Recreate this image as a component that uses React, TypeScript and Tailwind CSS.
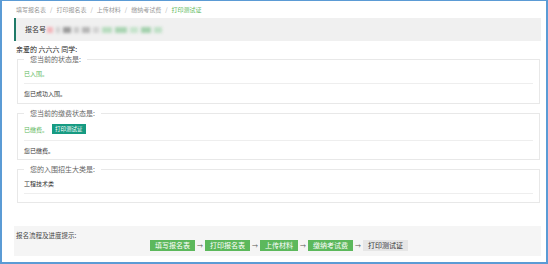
import type { FC, ReactNode } from "react";

const font = { fontFamily: '"Noto Sans CJK SC", "Noto Sans", sans-serif' };

const crumbs = ["填写报名表", "打印报名表", "上传材料", "缴纳考试费", "打印测试证"];

const steps = [
  { label: "填写报名表", done: true },
  { label: "打印报名表", done: true },
  { label: "上传材料", done: true },
  { label: "缴纳考试费", done: true },
  { label: "打印测试证", done: false },
];

const Box: FC<{ title: string; className?: string; children: ReactNode }> = ({ title, className, children }) => (
  <fieldset className={"border border-[#e8e8e8] px-[6px] " + (className ?? "")}>
    <legend className="px-[6px] text-[7px] leading-[10px] text-[#666]">{title}</legend>
    {children}
  </fieldset>
);

const App: FC = () => {
  return (
    <div
      style={font}
      className="w-[548px] h-[264px] overflow-hidden bg-white border-2 border-t border-[#5b9bd5] pl-[12px] pr-[5px] text-[#333]"
    >
      {/* breadcrumb */}
      <div className="h-[17px] flex items-center pl-[2px] text-[6px] text-[#999]">
        {crumbs.map((c, i) => (
          <span key={c} className="flex items-center">
            <span className={i === crumbs.length - 1 ? "text-[#5cb85c]" : ""}>{c}</span>
            {i < crumbs.length - 1 && <span className="px-[4px] text-[#aaa]">/</span>}
          </span>
        ))}
      </div>

      {/* registration number */}
      <div className="h-[23px] flex items-center bg-[#f0f0f0] border-l-2 border-[#1f7a68] pl-[9px]">
        <span className="text-[7px]">报名号</span>
        <div className="flex items-center gap-[3px] ml-[1px] blur-[1.5px]">
          <div className="w-[6px] h-[6px] bg-[#f3b6bb]" />
          <div className="w-[4px] h-[6px] bg-[#cfcfcf]" />
          <div className="w-[8px] h-[6px] bg-[#9a9a9a]" />
          <div className="w-[5px] h-[6px] bg-[#c8c8c8]" />
          <div className="w-[8px] h-[6px] bg-[#b5b5b5]" />
          <div className="w-[6px] h-[6px] bg-[#d2d2d2]" />
          <div className="w-[10px] h-[6px] bg-[#b8dcbf]" />
          <div className="w-[12px] h-[6px] bg-[#a9d4b2]" />
          <div className="w-[8px] h-[6px] bg-[#c5e3cb]" />
          <div className="w-[10px] h-[6px] bg-[#a3d1ad]" />
          <div className="w-[8px] h-[6px] bg-[#bfe0c6]" />
        </div>
      </div>

      {/* greeting */}
      <div className="h-[13px] pt-[3px] pl-[2px] text-[7px] leading-[10px] text-[#222]">亲爱的 六六六 同学:</div>

      <div className="pl-[3px] pr-[1px]">
        <Box title="您当前的状态是:">
          <div className="h-[19px] flex items-center text-[6px] text-[#5cb85c]">已入围。</div>
          <div className="border-t border-[#eeeeee]" />
          <div className="h-[19px] flex items-center text-[6px]">您已成功入围。</div>
        </Box>

        <Box title="您当前的缴费状态是:" className="mt-[4px]">
          <div className="h-[22px] flex items-center gap-[4px] text-[6px]">
            <span className="text-[#5cb85c]">已缴费。</span>
            <span className="h-[10px] px-[3px] flex items-center bg-[#169b82] text-white text-[5.5px]">打印测试证</span>
          </div>
          <div className="border-t border-[#eeeeee]" />
          <div className="h-[18px] flex items-center text-[6px]">您已缴费。</div>
        </Box>

        <Box title="您的入围招生大类是:" className="mt-[4px]">
          <div className="h-[19px] flex items-center text-[6px]">工程技术类</div>
          <div className="border-t border-[#eeeeee]" />
          <div className="h-[8px]" />
        </Box>
      </div>

      {/* progress */}
      <div className="mt-[23px] h-[30px] bg-[#f5f5f5] pt-[5px]">
        <div className="h-[9px] pl-[2px] text-[6.5px] leading-[9px] text-[#444]">报名流程及进度提示:</div>
        <div className="flex justify-center items-center pl-[3px]">
          {steps.map((s, i) => (
            <div key={s.label} className="flex items-center">
              <span
                className={
                  "h-[11px] px-[5px] flex items-center text-[7px] " +
                  (s.done ? "bg-[#5cb85c] text-white" : "bg-[#e6e6e6] text-[#333]")
                }
              >
                {s.label}
              </span>
              {i < steps.length - 1 && (
                <span className="w-[10px] text-center text-[6px] text-[#555]">→</span>
              )}
            </div>
          ))}
        </div>
      </div>
    </div>
  );
};

export default App;
